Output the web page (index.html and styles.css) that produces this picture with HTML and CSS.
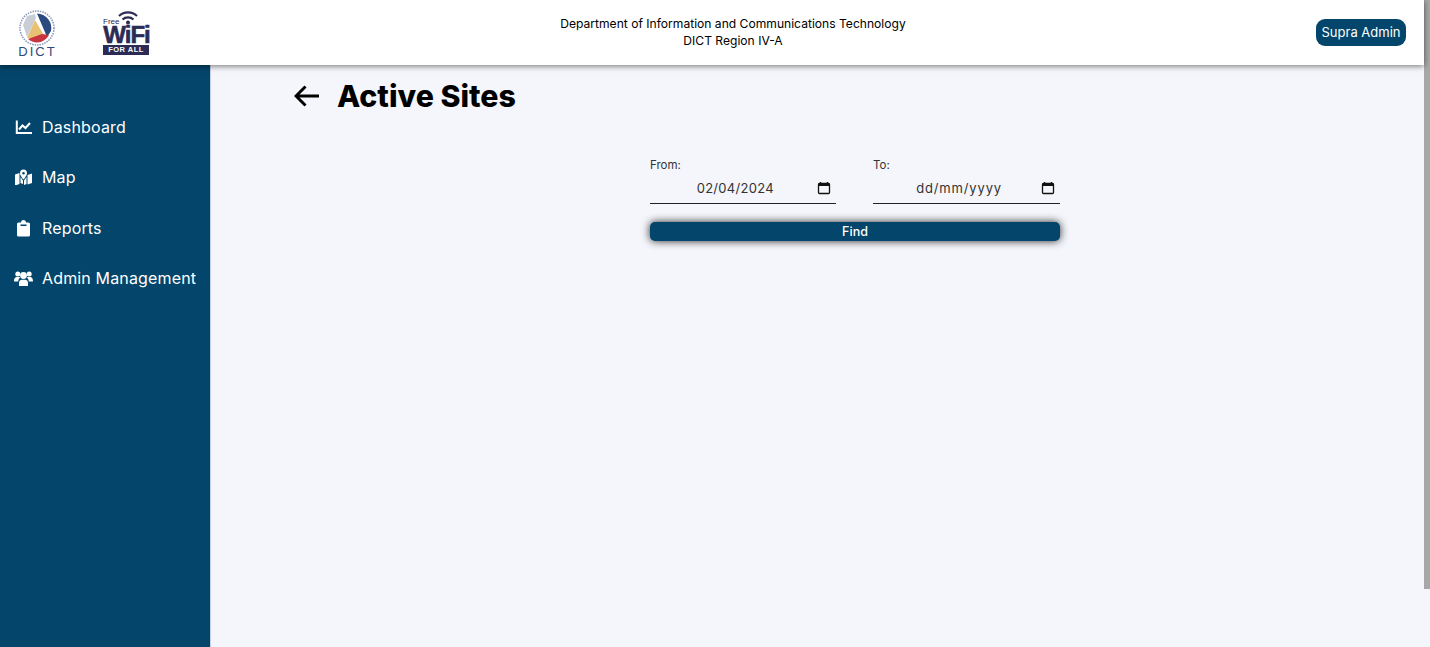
FILE: index.html
```html
<!DOCTYPE html>
<html lang="en">
<head>
	<meta charset="UTF-8">
	<title>Active Sites</title>
	<link rel="stylesheet" href="styles.css">
</head>
<body>
	<div class="topbar">
		<div class="logos">
			<svg class="logo_dict" width="40" height="50" viewBox="0 0 40 50">
				<circle cx="19" cy="18" r="17" fill="#fff" stroke="#8d9bb8" stroke-width="1.6" stroke-dasharray="1.5 1"/>
				<path d="M5 15 L9 6 L17 4 L18 8 L9 27 Z" fill="#c9cdd6"/>
				<path d="M19 3.500 A14.500 14.500 0 0 1 33 21 L29 27 Z" fill="#2a4a80"/>
				<path d="M17 10 L27 27 L24 29 L9 28 Z" fill="#e8c274"/>
				<path d="M10 29 L24 24 L31 25 A14.500 14.500 0 0 1 19 32.500 A14.500 14.500 0 0 1 10 29 Z" fill="#c8343f"/>
				<text x="19.500" y="46" class="dict_text" text-anchor="middle">DICT</text>
			</svg>
			<div class="logo_wifi">
				<svg class="wifi_arcs" width="22" height="15" viewBox="0 0 22 15">
					<path d="M2 6 A13 13 0 0 1 20 6 M5.500 9.500 A8 8 0 0 1 16.500 9.500" fill="none" stroke="#2b2b55" stroke-width="2.200"/>
					<circle cx="11" cy="12.500" r="2" fill="#2b2b55"/>
				</svg>
				<span class="wifi_free">Free</span>
				<span class="wifi_name">WiFi</span>
				<span class="wifi_all">FOR ALL</span>
			</div>
		</div>
		<div class="dept">
			<div>Department of Information and Communications Technology</div>
			<div>DICT Region IV-A</div>
		</div>
		<div class="user_btn">Supra Admin</div>
	</div>
	<div class="main">
		<ul class="sidebar">
			<li>
				<svg width="19" height="16" viewBox="0 0 19 16"><path d="M2.800 1.500V14H18M5 10.500L8.500 6.500L11.500 9L16 4" fill="none" stroke="#fff" stroke-width="2"/></svg>
				Dashboard
			</li>
			<li>
				<svg width="19" height="16" viewBox="0 0 19 16"><path d="M1 5.500L5.500 4V15L1 16.500ZM6.500 8L9 11.500V15L6.500 14ZM10 11.500L12.500 8V15L10 16ZM13.500 6L18 4.500V14L13.500 15.500Z" fill="#fff"/><path d="M9.500 0.500A3.700 3.700 0 0 1 13 4.200C13 6.500 9.500 10.500 9.500 10.500S6 6.500 6 4.200A3.700 3.700 0 0 1 9.500 0.500ZM9.500 3A1.300 1.300 0 1 0 9.500 5.600A1.300 1.300 0 1 0 9.500 3Z" fill="#fff" fill-rule="evenodd"/></svg>
				Map
			</li>
			<li>
				<svg width="19" height="17" viewBox="0 0 19 17"><path d="M4.500 2.500H7A2.500 2.500 0 0 1 12 2.500H14.500A1.500 1.500 0 0 1 16 4V15A1.500 1.500 0 0 1 14.500 16.500H4.500A1.500 1.500 0 0 1 3 15V4A1.500 1.500 0 0 1 4.500 2.500ZM6.500 4.500V6H12.500V4.500Z" fill="#fff" fill-rule="evenodd"/></svg>
				Reports
			</li>
			<li>
				<svg width="19" height="17" viewBox="0 0 19 17"><circle cx="3.800" cy="4" r="2.500" fill="#fff"/><circle cx="15.200" cy="4" r="2.500" fill="#fff"/><circle cx="9.500" cy="5.500" r="3.400" fill="#fff"/><path d="M0 11.500C0 8 1.500 7 3 7H5C5.500 7 6 7.200 6.300 7.500C5 8.300 4.300 9.500 4.200 11.500ZM19 11.500C19 8 17.500 7 16 7H14C13.500 7 13 7.200 12.700 7.500C14 8.300 14.700 9.500 14.800 11.500ZM5 16V13C5 11 6.500 9.800 7.800 9.800H11.200C12.500 9.800 14 11 14 13V16Z" fill="#fff"/></svg>
				Admin Management
			</li>
		</ul>
		<div class="content">
			<div class="title_row">
				<svg width="26" height="22" viewBox="0 0 26 22"><path d="M25 11H2M11.500 1.500L2 11L11.500 20.500" fill="none" stroke="#000" stroke-width="3"/></svg>
				<h1>Active Sites</h1>
			</div>
			<form class="find_form" action="#">
				<div class="dates">
					<div class="field">
						<label>From:</label>
						<div class="date_input">
							<span class="date_value">02/04/2024</span>
							<svg width="14" height="14" viewBox="0 0 14 14"><path d="M3.500 1V3M10.500 1V3" stroke="#111" stroke-width="1.300"/><rect x="1.500" y="2.500" width="11" height="10" rx="1" fill="none" stroke="#111" stroke-width="1.300"/><rect x="1.500" y="2.500" width="11" height="2.500" fill="#111"/></svg>
						</div>
					</div>
					<div class="field">
						<label>To:</label>
						<div class="date_input">
							<span class="date_value date_empty">dd/mm/yyyy</span>
							<svg width="14" height="14" viewBox="0 0 14 14"><path d="M3.500 1V3M10.500 1V3" stroke="#111" stroke-width="1.300"/><rect x="1.500" y="2.500" width="11" height="10" rx="1" fill="none" stroke="#111" stroke-width="1.300"/><rect x="1.500" y="2.500" width="11" height="2.500" fill="#111"/></svg>
						</div>
					</div>
				</div>
				<button class="find_btn" type="button">Find</button>
			</form>
		</div>
	</div>
	<div class="scroll_thumb"></div>
</body>
</html>
```

FILE: styles.css
```css
*{
	box-sizing:border-box;
}
html,body{
	margin:0;
	height:100%;
	overflow:hidden;
}
body{
	background-color:#f4f6fb;
	font-family:"Inter","Noto Sans",sans-serif;
	display:flex;
	flex-direction:column;
	padding-right:6px;
	position:relative;
}
.topbar{
	height:65px;
	background-color:#fff;
	box-shadow:0 1px 6px rgba(0,0,0,.55);
	display:flex;
	justify-content:space-between;
	align-items:center;
	padding:0 18px;
	position:relative;
	z-index:2;
	flex-shrink:0;
}
.logos{
	display:flex;
	gap:45px;
	width:132px;
	height:65px;
}
.logo_dict{
	margin-top:10px;
	flex-shrink:0;
}
.dict_text{
	font-family:"Liberation Sans",sans-serif;
	font-size:13px;
	letter-spacing:2px;
	fill:#2f4a7c;
}
.logo_wifi{
	width:47px;
	height:47px;
	position:relative;
	color:#2b2b55;
	margin-top:8px;
}
.wifi_arcs{
	position:absolute;
	top:2px;
	left:14px;
}
.wifi_free{
	position:absolute;
	top:10px;
	left:0;
	font-size:8px;
	line-height:8px;
	font-family:"Liberation Sans",sans-serif;
}
.wifi_name{
	position:absolute;
	top:18px;
	left:0;
	width:47px;
	text-align:center;
	font-family:"Liberation Sans",sans-serif;
	font-weight:700;
	font-size:24px;
	line-height:18px;
	letter-spacing:-1px;
	-webkit-text-stroke:.6px #2b2b55;
}
.wifi_all{
	position:absolute;
	top:37px;
	left:0;
	width:46px;
	height:10px;
	background-color:#2b2b55;
	color:#fff;
	text-align:center;
	font-family:"Liberation Sans",sans-serif;
	font-weight:700;
	font-size:7.5px;
	line-height:10px;
	letter-spacing:.5px;
}
.dept{
	font-size:12.1px;
	line-height:17px;
	text-align:center;
	color:#000;
	width:346px;
	white-space:nowrap;
	padding-bottom:2px;
}
.user_btn{
	width:90px;
	height:27px;
	line-height:27px;
	background-color:#03456b;
	color:#fff;
	border-radius:9px;
	text-align:center;
	font-size:13px;
	white-space:nowrap;
}
.main{
	display:flex;
	flex:1;
	min-height:0;
}
.sidebar{
	width:210px;
	background-color:#03456b;
	box-shadow:1px 0 0 #c4cfe0;
	margin:0;
	padding:37px 0 0 0;
	list-style:none;
	flex-shrink:0;
}
.sidebar li{
	height:50px;
	display:flex;
	align-items:center;
	gap:9px;
	padding-left:14px;
	color:#fff;
	font-size:16px;
	letter-spacing:.15px;
	white-space:nowrap;
}
.sidebar li:nth-child(2){
	margin-bottom:1px;
}
.sidebar svg{
	flex-shrink:0;
}
.content{
	flex:1;
	padding:14px 0 0 84px;
	display:flex;
	flex-direction:column;
}
.title_row{
	display:flex;
	align-items:center;
	gap:17px;
	height:34px;
}
.title_row h1{
	margin:0;
	font-size:30.3px;
	font-weight:800;
	color:#000;
	white-space:nowrap;
}
.find_form{
	width:410px;
	margin:44px 0 0 356px;
}
.dates{
	display:grid;
	grid-template-columns:186px 187px;
	justify-content:space-between;
}
.field label{
	display:block;
	font-size:11.5px;
	line-height:16px;
	color:#333;
}
.date_input{
	height:30px;
	margin-top:1px;
	padding-bottom:1px;
	border-bottom:1px solid #222;
	display:flex;
	align-items:center;
	justify-content:flex-end;
	gap:43px;
	padding-right:5px;
	font-size:13px;
	color:#333;
}
.date_value{
	letter-spacing:.3px;
}
.date_empty{
	letter-spacing:.85px;
	margin-right:-4px;
}
.find_btn{
	display:block;
	width:100%;
	height:19px;
	margin-top:18px;
	border:0;
	padding:0;
	border-radius:5px;
	background-color:#03456b;
	color:#fff;
	font-family:inherit;
	font-size:12.5px;
	font-weight:500;
	box-shadow:0 0 8px rgba(0,0,0,.85);
}
.scroll_thumb{
	position:absolute;
	top:0;
	right:0;
	width:6px;
	height:589px;
	background-color:#a8a8a8;
}
```
